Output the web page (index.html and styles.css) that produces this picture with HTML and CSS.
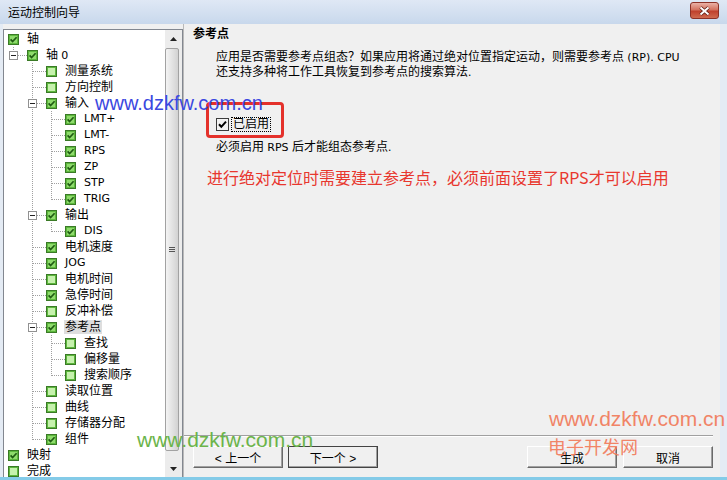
FILE: index.html
```html
<!DOCTYPE html>
<html>
<head>
	<meta charset="UTF-8" />
	<title>运动控制向导</title>
	<link rel="stylesheet" href="styles.css">
</head>
<body>
<svg class="defs" width="0" height="0">
    <symbol id="on" viewBox="0 0 11 11">
        <rect x=".5" y=".5" width="10" height="10" fill="#5db83d" stroke="#3a7a26"/>
        <rect x="2" y="2" width="7" height="7" fill="#8fdb6c"/>
        <path d="M2.6 5.4 L4.6 7.6 L8.6 3.2" fill="none" stroke="#1f5c12" stroke-width="1.7"/>
    </symbol>
    <symbol id="off" viewBox="0 0 11 11">
        <rect x=".5" y=".5" width="10" height="10" fill="#5db83d" stroke="#3a7a26"/>
        <rect x="2" y="2" width="7" height="7" fill="#c6f1ad"/>
    </symbol>
</svg>

<div class="window">
    <div class="titlebar">
        <span class="title">运动控制向导</span>
        <span class="close">
            <svg width="13" height="10" viewBox="0 0 13 10">
                <path d="M2.5 1.5 L10.5 8.5 M10.5 1.5 L2.5 8.5" stroke="#5b1b12" stroke-width="3.6" fill="none"/>
                <path d="M2.5 1.5 L10.5 8.5 M10.5 1.5 L2.5 8.5" stroke="#fff" stroke-width="2" fill="none"/>
            </svg>
        </span>
    </div>

    <div class="frame">
        <div class="tree">
            <div class="tree-list">
                <div class="row"><span class="cb"><svg><use href="#on"/></svg></span><span class="tx">轴</span></div>
                <div class="row"><span class="c l"><i class="exp"></i></span><span class="cb j"><svg><use href="#on"/></svg></span><span class="tx">轴 <span class="en">0</span></span></div>
                <div class="row"><span class="c"></span><span class="c t"></span><span class="cb j"><svg><use href="#off"/></svg></span><span class="tx">测量系统</span></div>
                <div class="row"><span class="c"></span><span class="c t"></span><span class="cb j"><svg><use href="#off"/></svg></span><span class="tx">方向控制</span></div>
                <div class="row"><span class="c"></span><span class="c t"><i class="exp"></i></span><span class="cb j"><svg><use href="#on"/></svg></span><span class="tx">输入</span></div>
                <div class="row"><span class="c"></span><span class="c v"></span><span class="c t"></span><span class="cb j"><svg><use href="#on"/></svg></span><span class="tx en">LMT+</span></div>
                <div class="row"><span class="c"></span><span class="c v"></span><span class="c t"></span><span class="cb j"><svg><use href="#on"/></svg></span><span class="tx en">LMT-</span></div>
                <div class="row"><span class="c"></span><span class="c v"></span><span class="c t"></span><span class="cb j"><svg><use href="#on"/></svg></span><span class="tx en">RPS</span></div>
                <div class="row"><span class="c"></span><span class="c v"></span><span class="c t"></span><span class="cb j"><svg><use href="#on"/></svg></span><span class="tx en">ZP</span></div>
                <div class="row"><span class="c"></span><span class="c v"></span><span class="c t"></span><span class="cb j"><svg><use href="#on"/></svg></span><span class="tx en">STP</span></div>
                <div class="row"><span class="c"></span><span class="c v"></span><span class="c l"></span><span class="cb j"><svg><use href="#on"/></svg></span><span class="tx en">TRIG</span></div>
                <div class="row"><span class="c"></span><span class="c t"><i class="exp"></i></span><span class="cb j"><svg><use href="#on"/></svg></span><span class="tx">输出</span></div>
                <div class="row"><span class="c"></span><span class="c v"></span><span class="c l"></span><span class="cb j"><svg><use href="#on"/></svg></span><span class="tx en">DIS</span></div>
                <div class="row"><span class="c"></span><span class="c t"></span><span class="cb j"><svg><use href="#on"/></svg></span><span class="tx">电机速度</span></div>
                <div class="row"><span class="c"></span><span class="c t"></span><span class="cb j"><svg><use href="#on"/></svg></span><span class="tx en">JOG</span></div>
                <div class="row"><span class="c"></span><span class="c t"></span><span class="cb j"><svg><use href="#off"/></svg></span><span class="tx">电机时间</span></div>
                <div class="row"><span class="c"></span><span class="c t"></span><span class="cb j"><svg><use href="#on"/></svg></span><span class="tx">急停时间</span></div>
                <div class="row"><span class="c"></span><span class="c t"></span><span class="cb j"><svg><use href="#off"/></svg></span><span class="tx">反冲补偿</span></div>
                <div class="row"><span class="c"></span><span class="c t"><i class="exp"></i></span><span class="cb j"><svg><use href="#on"/></svg></span><span class="tx sel">参考点</span></div>
                <div class="row"><span class="c"></span><span class="c v"></span><span class="c t"></span><span class="cb j"><svg><use href="#off"/></svg></span><span class="tx">查找</span></div>
                <div class="row"><span class="c"></span><span class="c v"></span><span class="c t"></span><span class="cb j"><svg><use href="#off"/></svg></span><span class="tx">偏移量</span></div>
                <div class="row"><span class="c"></span><span class="c v"></span><span class="c l"></span><span class="cb j"><svg><use href="#off"/></svg></span><span class="tx">搜索顺序</span></div>
                <div class="row"><span class="c"></span><span class="c t"></span><span class="cb j"><svg><use href="#off"/></svg></span><span class="tx">读取位置</span></div>
                <div class="row"><span class="c"></span><span class="c t"></span><span class="cb j"><svg><use href="#off"/></svg></span><span class="tx">曲线</span></div>
                <div class="row"><span class="c"></span><span class="c t"></span><span class="cb j"><svg><use href="#off"/></svg></span><span class="tx">存储器分配</span></div>
                <div class="row"><span class="c"></span><span class="c l"></span><span class="cb j"><svg><use href="#on"/></svg></span><span class="tx">组件</span></div>
                <div class="row"><span class="cb"><svg><use href="#on"/></svg></span><span class="tx">映射</span></div>
                <div class="row"><span class="cb"><svg><use href="#off"/></svg></span><span class="tx">完成</span></div>
            </div>
            <div class="scroll">
                <span class="arrow"><svg width="7" height="4" viewBox="0 0 7 4"><path d="M0 4 L3.5 0 L7 4 Z" fill="#222"/></svg></span>
                <span class="thumb"><i class="grip"></i></span>
                <span class="arrow"><svg width="7" height="4" viewBox="0 0 7 4"><path d="M0 0 L7 0 L3.5 4 Z" fill="#222"/></svg></span>
            </div>
        </div>

        <div class="main">
            <div class="content">
                <div class="heading">参考点</div>
                <div class="desc">应用是否需要参考点组态？如果应用将通过绝对位置指定运动，则需要参考点 <span class="en">(RP). CPU</span><br>还支持多种将工作工具恢复到参考点的搜索算法.</div>
                <div class="enable">
                    <svg width="13" height="13" viewBox="0 0 13 13">
                        <rect x=".5" y=".5" width="12" height="12" fill="#f3f3f3" stroke="#3c3c3c"/>
                        <path d="M3 6.3 L5.3 8.8 L10 3.6" fill="none" stroke="#000" stroke-width="2"/>
                    </svg>
                    <span class="focus">已启用</span>
                </div>
                <div class="note">必须启用 <span class="en">RPS</span> 后才能组态参考点.</div>
                <div class="hint">进行绝对定位时需要建立参考点，必须前面设置了RPS才可以启用</div>
            </div>
            <div class="sep"></div>
            <div class="buttons">
                <button class="btn">&lt; 上一个</button>
                <button class="btn default">下一个 &gt;</button>
                <span class="spacer"></span>
                <button class="btn">生成</button>
                <button class="btn">取消</button>
            </div>
        </div>
    </div>

    <div class="mark-box"></div>
    <div class="wm wm-blue">www.dzkfw.com.cn</div>
    <div class="wm wm-green">www.dzkfw.com.cn</div>
    <div class="wm wm-orange">www.dzkfw.com.cn</div>
    <div class="wm wm-orange-cn">电子开发网</div>
</div>
</body>
</html>
```

FILE: styles.css
```css
body{
    margin: 0;
    font-family: "Liberation Sans", "Noto Sans CJK SC", sans-serif;
    font-size: 12px;
    color: #000;
}

.defs{
    position: absolute;
}

.en{
    font-family: "DejaVu Sans", sans-serif;
    font-size: 11px;
}

.window{
    position: relative;
    width: 727px;
    height: 480px;
    overflow: hidden;
    display: flex;
    flex-direction: column;
    background: #e4ebf4;
}

.titlebar{
    height: 24px;
    flex: none;
    display: flex;
    justify-content: space-between;
    padding: 0 8px 0 8px;
    background: linear-gradient(#dfe8f5, #c8d8ec);
}

.title{
    line-height: 24px;
    font-family: "Noto Sans CJK SC", sans-serif;
}

.close{
    width: 29px;
    height: 17px;
    margin-top: 2px;
    box-sizing: border-box;
    border: 1px solid #8c3127;
    border-radius: 3px;
    background: linear-gradient(#eab1a6, #d3725f 45%, #c0412d 55%, #cf6a4f);
    display: flex;
    align-items: center;
    justify-content: center;
}

.frame{
    flex: 1;
    min-height: 0;
    display: flex;
    padding: 0 7px 0 3px;
    border-bottom: 3px solid #84cbe8;
    background: #f0f0f0;
    box-shadow: inset 3px 0 #e4ebf4, inset -7px 0 #e4ebf4;
}

/* tree */
.tree{
    width: 180px;
    flex: none;
    margin-top: 5px;
    box-sizing: border-box;
    border: 1px solid #828790;
    border-bottom: none;
    background: #fff;
    display: flex;
    overflow: hidden;
}

.tree-list{
    flex: 1;
    padding-top: 1px;
}

.row{
    height: 16px;
    display: flex;
    align-items: center;
    white-space: nowrap;
}

.c, .cb{
    width: 19px;
    height: 16px;
    flex: none;
    display: flex;
    align-items: center;
    justify-content: center;
}

.cb svg{
    width: 11px;
    height: 11px;
}

.v{
    background: repeating-linear-gradient(#a0a0a0 0 1px, transparent 1px 2px) 9px 0 / 1px 100% no-repeat;
}

.t{
    background:
        repeating-linear-gradient(to right, #a0a0a0 0 1px, transparent 1px 2px) 10px 8px / 9px 1px no-repeat,
        repeating-linear-gradient(#a0a0a0 0 1px, transparent 1px 2px) 9px 0 / 1px 100% no-repeat;
}

.l{
    background:
        repeating-linear-gradient(to right, #a0a0a0 0 1px, transparent 1px 2px) 10px 8px / 9px 1px no-repeat,
        repeating-linear-gradient(#a0a0a0 0 1px, transparent 1px 2px) 9px 0 / 1px 9px no-repeat;
}

.j{
    background: repeating-linear-gradient(to right, #a0a0a0 0 1px, transparent 1px 2px) 1px 8px / 3px 1px no-repeat;
}

.exp{
    width: 9px;
    height: 9px;
    box-sizing: border-box;
    border: 1px solid #919191;
    background: #fff linear-gradient(#222, #222) center / 5px 1px no-repeat;
}

.tx{
    margin-left: 3px;
    padding: 0 1px;
    line-height: 14px;
}

.tx.sel{
    background: #dedede;
}

.scroll{
    width: 17px;
    flex: none;
    display: flex;
    flex-direction: column;
    background: #ececec;
}

.arrow{
    height: 17px;
    flex: none;
    display: flex;
    align-items: center;
    justify-content: center;
}

.thumb{
    flex: 1;
    margin: 1px 3px 9px 0;
    border: 1px solid #a2a2a2;
    border-radius: 2px;
    background: linear-gradient(to right, #f4f4f4, #e3e3e3 50%, #d2d2d2);
    display: flex;
    align-items: center;
    justify-content: center;
}

.grip{
    width: 6px;
    height: 5px;
    background: repeating-linear-gradient(#555 0 1px, transparent 1px 2px);
}

/* right side */
.main{
    flex: 1;
    display: flex;
    flex-direction: column;
    border-left: 1px solid #b9b9b9;
}

.content{
    flex: 1;
    padding: 3px 0 0 9px;
}

.heading{
    font-weight: bold;
    line-height: 14px;
}

.desc{
    margin: 9px 0 0 23px;
    line-height: 14px;
    white-space: nowrap;
}

.enable{
    margin: 37px 0 0 23px;
    height: 16px;
    display: flex;
    align-items: center;
    gap: 2px;
}

.focus{
    border: 1px dotted #000;
    padding: 0 1px;
    line-height: 13px;
    font-size: 12px;
}

.note{
    margin: 8px 0 0 23px;
    line-height: 14px;
}

.hint{
    margin: 12px 0 0 14px;
    font-family: "Noto Sans CJK SC", sans-serif;
    font-size: 16px;
    line-height: 20px;
    color: #e8372e;
}

.sep{
    margin-right: 7px;
    border-top: 1px solid #a0a0a0;
    border-bottom: 1px solid #fff;
}

.buttons{
    display: flex;
    gap: 5px;
    padding: 9px 7px 9px 9px;
}

.spacer{
    flex: 1;
}

.btn{
    width: 90px;
    height: 22px;
    padding: 0;
    font-family: "Liberation Sans", "Noto Sans CJK SC", sans-serif;
    font-size: 12px;
    color: #000;
    background: #f0f0f0;
    border: 1px solid;
    border-color: #fff #6a6a6a #6a6a6a #fff;
    box-shadow: inset -1px -1px #a0a0a0;
}

.btn.default{
    outline: 1px solid #444;
    outline-offset: -1px;
}

.buttons .btn:last-child{
    margin-left: 1px;
}

/* annotation overlay */
.mark-box{
    position: absolute;
    left: 206px;
    top: 102px;
    width: 78px;
    height: 36px;
    box-sizing: border-box;
    border: 3px solid #e4312b;
    border-radius: 4px;
}

.wm{
    position: absolute;
    font-family: "Liberation Sans", sans-serif;
    line-height: 20px;
    white-space: nowrap;
}

.wm-blue{
    left: 95px;
    top: 93px;
    font-size: 20px;
    color: #3b48e0;
}

.wm-green{
    left: 137px;
    top: 430px;
    font-size: 21px;
    color: #6bb44a;
}

.wm-orange{
    left: 549px;
    top: 409px;
    font-size: 21px;
    color: #f27b5b;
    opacity: .92;
}

.wm-orange-cn{
    left: 548px;
    top: 436px;
    font-family: "Noto Sans CJK SC", sans-serif;
    font-size: 18px;
    line-height: 20px;
    color: #f27b5b;
    opacity: .92;
}
```
